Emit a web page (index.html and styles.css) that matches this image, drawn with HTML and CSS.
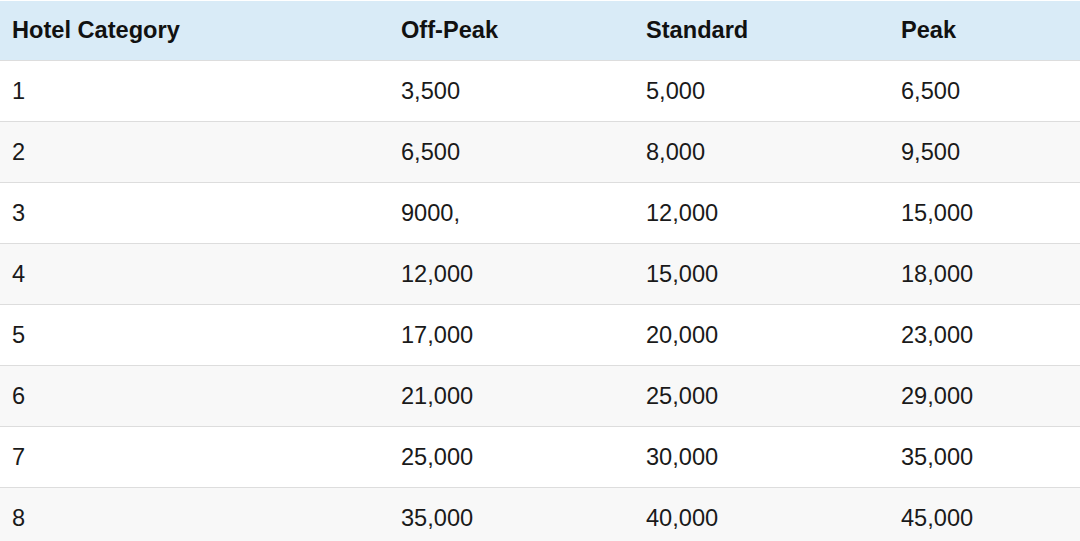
FILE: index.html
```html
<!DOCTYPE html>
<html>
<head>
<meta charset="utf-8">
<link rel="stylesheet" href="styles.css">
</head>
<body>
<table class="rates">
  <colgroup>
    <col class="c1"><col class="c2"><col class="c3"><col class="c4">
  </colgroup>
  <thead>
    <tr><th>Hotel Category</th><th>Off-Peak</th><th>Standard</th><th>Peak</th></tr>
  </thead>
  <tbody>
    <tr><td>1</td><td>3,500</td><td>5,000</td><td>6,500</td></tr>
    <tr><td>2</td><td>6,500</td><td>8,000</td><td>9,500</td></tr>
    <tr><td>3</td><td>9000,</td><td>12,000</td><td>15,000</td></tr>
    <tr><td>4</td><td>12,000</td><td>15,000</td><td>18,000</td></tr>
    <tr><td>5</td><td>17,000</td><td>20,000</td><td>23,000</td></tr>
    <tr><td>6</td><td>21,000</td><td>25,000</td><td>29,000</td></tr>
    <tr><td>7</td><td>25,000</td><td>30,000</td><td>35,000</td></tr>
    <tr><td>8</td><td>35,000</td><td>40,000</td><td>45,000</td></tr>
  </tbody>
</table>
</body>
</html>
```

FILE: styles.css
```css
html, body {
  margin: 0;
  padding: 0;
  background: #ffffff;
}
body {
  padding-top: 1px;
  font-family: "Liberation Sans", Arial, sans-serif;
}
.rates {
  width: 1080px;
  border-collapse: collapse;
  table-layout: fixed;
  font-size: 23.6px;
  color: #1a1a1a;
}
.c1 { width: 389px; }
.c2 { width: 245px; }
.c3 { width: 255px; }
.c4 { width: 191px; }
.rates th,
.rates td {
  text-align: left;
  padding: 0 12px;
  height: 60px;
  line-height: 60px;
  border-bottom: 1px solid #dddddd;
  white-space: nowrap;
}
.rates th {
  font-weight: bold;
  color: #111111;
  background: #d9ebf7;
  height: 59px;
  line-height: 59px;
}
.rates tbody tr:nth-child(odd) td {
  background: #ffffff;
}
.rates tbody tr:nth-child(even) td {
  background: #f8f8f8;
}
```
